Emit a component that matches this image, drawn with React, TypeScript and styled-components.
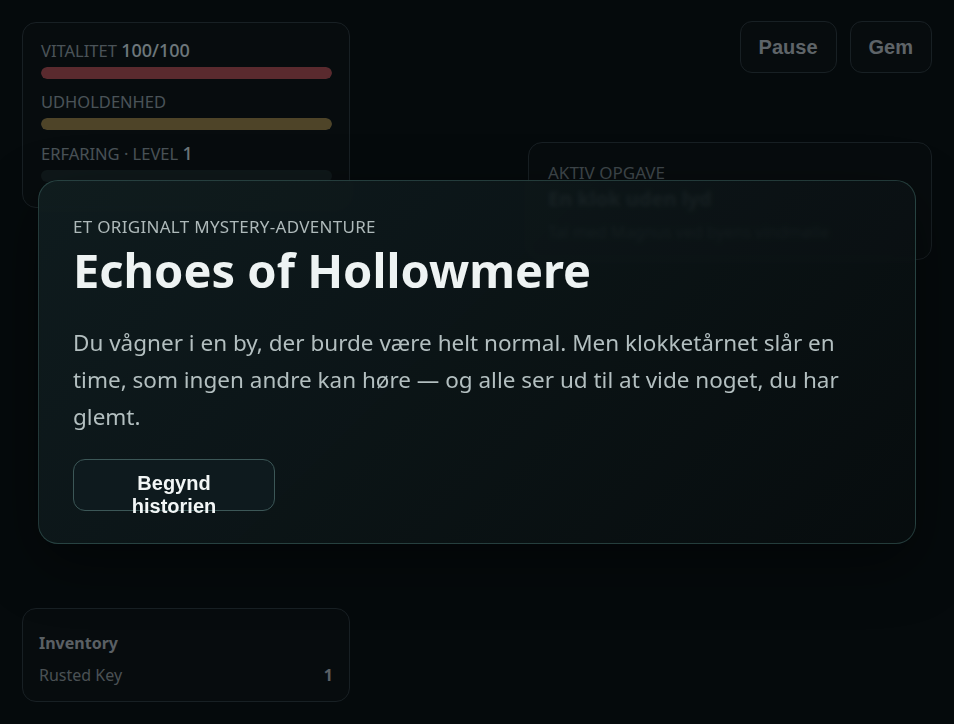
import React from 'react';
import styled, { createGlobalStyle } from 'styled-components';

const GlobalStyle = createGlobalStyle`
  html, body {
    margin: 0;
    padding: 0;
    background: #070e10;
    font-family: "Noto Sans", "Open Sans", sans-serif;
  }
  * {
    box-sizing: border-box;
  }
`;

const Page = styled.div`
  display: grid;
  grid-template-columns: 328px 1fr;
  gap: 24px;
  height: 100vh;
  padding: 22px;
`;

const LeftColumn = styled.div`
  display: flex;
  flex-direction: column;
  justify-content: space-between;
`;

const RightColumn = styled.div`
  display: flex;
  flex-direction: column;
  align-items: flex-end;
`;

const Card = styled.div`
  background: #0b1214;
  border: 1px solid #2d3a40;
  border-radius: 14px;
`;

const StatsCard = styled(Card)`
  height: 186px;
  padding: 15px 17px 0 18px;
  display: flex;
  flex-direction: column;
  gap: 11px;
`;

const Stat = styled.div`
  display: flex;
  flex-direction: column;
  gap: 4px;
`;

const StatLabel = styled.div`
  font-size: 16.5px;
  line-height: 24px;
  text-transform: uppercase;
  color: #91a0a8;

  b {
    font-size: 18px;
    font-weight: 500;
    color: #d9e8ee;
  }
`;

const Bar = styled.div<{ $track: string }>`
  height: 12px;
  border-radius: 6px;
  background: ${(p) => p.$track};
  overflow: hidden;
`;

const Fill = styled.div<{ $color: string }>`
  height: 100%;
  border-radius: 6px;
  background: ${(p) => p.$color};
`;

const InventoryCard = styled(Card)`
  padding: 22px 16px 14px 16px;
`;

const InventoryTitle = styled.div`
  font-size: 16px;
  font-weight: 700;
  color: #b1bac0;
  line-height: 24px;
  margin-bottom: 8px;
`;

const InventoryRow = styled.div`
  display: flex;
  justify-content: space-between;
  font-size: 16px;
  line-height: 24px;
  color: #919ca0;

  b {
    font-weight: 700;
    color: #b1bac0;
  }
`;

const Toolbar = styled.div`
  display: flex;
  gap: 13px;
  margin-top: -1px;
`;

const ToolButton = styled.button`
  height: 52px;
  padding: 0 18px;
  border-radius: 12px;
  background: #0b1214;
  border: 1px solid #2d3a40;
  color: #b9c2c8;
  font-family: "Liberation Sans", Arial, sans-serif;
  font-weight: 700;
  font-size: 20px;
`;

const QuestCard = styled(Card)`
  width: 404px;
  height: 118px;
  margin-top: 69px;
  padding: 18px 19px 0 19px;
`;

const QuestLabel = styled.div`
  font-size: 17px;
  line-height: 24px;
  text-transform: uppercase;
  color: #7b8a90;
`;

const QuestTitle = styled.div`
  font-size: 20px;
  font-weight: 700;
  line-height: 28px;
  color: #8a979c;
`;

const QuestText = styled.div`
  font-size: 16px;
  line-height: 38px;
  color: #6a777c;
`;

const Backdrop = styled.div`
  position: fixed;
  inset: 0;
  background: rgba(3, 6, 8, 0.5);
  display: flex;
  align-items: center;
  justify-content: center;
`;

const Modal = styled.section`
  width: calc(100% - 76px);
  padding: 34px 34px 32px 34px;
  border-radius: 20px;
  border: 1px solid rgba(100, 160, 152, 0.3);
  background: linear-gradient(135deg, rgba(18, 32, 34, 0.82), rgba(8, 13, 15, 0.86));
  backdrop-filter: blur(2px);
  box-shadow: 0 20px 60px rgba(0, 0, 0, 0.45);
`;

const Eyebrow = styled.div`
  font-size: 17px;
  line-height: 24px;
  letter-spacing: 0.3px;
  text-transform: uppercase;
  color: #aeb9ba;
`;

const Title = styled.h1`
  margin: 3px 0 0 0;
  font-size: 47px;
  line-height: 56px;
  font-weight: 700;
  color: #eef3f3;
`;

const Lead = styled.p`
  margin: 26px 0 24px 0;
  font-size: 22.5px;
  line-height: 37px;
  color: #b3bfc0;
`;

const StartButton = styled.button`
  width: 202px;
  height: 52px;
  padding: 12px 22px 0 22px;
  border-radius: 12px;
  background: #0e1a1e;
  border: 1px solid #3c5757;
  color: #f2f6f6;
  font-family: "Liberation Sans", Arial, sans-serif;
  font-weight: 700;
  font-size: 20px;
  line-height: 23px;
  display: flex;
  align-items: flex-start;
  justify-content: center;
  overflow: visible;
`;

const stats = [
  { label: 'Vitalitet', value: '100/100', pct: 100, color: '#b14e54' },
  { label: 'Udholdenhed', value: '', pct: 100, color: '#998248' },
  { label: 'Erfaring · Level', value: '1', pct: 0, color: '#5fa9a0' },
];

export default function App() {
  return (
    <>
      <GlobalStyle />
      <Page>
        <LeftColumn>
          <StatsCard>
            {stats.map((s) => (
              <Stat key={s.label}>
                <StatLabel>
                  {s.label} {s.value && <b>{s.value}</b>}
                </StatLabel>
                <Bar $track="#1b2a2c">
                  <Fill $color={s.color} style={{ width: `${s.pct}%` }} />
                </Bar>
              </Stat>
            ))}
          </StatsCard>
          <InventoryCard>
            <InventoryTitle>Inventory</InventoryTitle>
            <InventoryRow>
              <span>Rusted Key</span>
              <b>1</b>
            </InventoryRow>
          </InventoryCard>
        </LeftColumn>
        <RightColumn>
          <Toolbar>
            <ToolButton>Pause</ToolButton>
            <ToolButton>Gem</ToolButton>
          </Toolbar>
          <QuestCard>
            <QuestLabel>Aktiv opgave</QuestLabel>
            <QuestTitle>En klok uden lyd</QuestTitle>
            <QuestText>Tal med Magnus ved byens vindmølle</QuestText>
          </QuestCard>
        </RightColumn>
      </Page>
      <Backdrop>
        <Modal>
          <Eyebrow>Et originalt mystery-adventure</Eyebrow>
          <Title>Echoes of Hollowmere</Title>
          <Lead>
            Du vågner i en by, der burde være helt normal. Men klokketårnet slår en time, som ingen
            andre kan høre — og alle ser ud til at vide noget, du har glemt.
          </Lead>
          <StartButton>Begynd historien</StartButton>
        </Modal>
      </Backdrop>
    </>
  );
}
